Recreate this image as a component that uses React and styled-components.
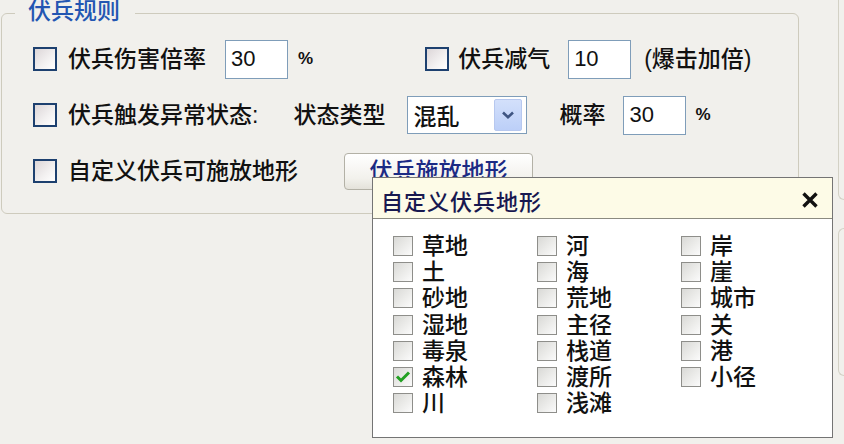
import React from 'react';
import styled, { createGlobalStyle } from 'styled-components';

const GlobalStyle = createGlobalStyle`
  html, body {
    margin: 0;
    padding: 0;
    background: #f1f0ec;
  }
  body {
    font-family: "Liberation Sans", "Noto Sans CJK SC", sans-serif;
    font-weight: 500;
    color: #111;
  }
`;

const Page = styled.div`
  position: relative;
  display: flex;
  align-items: flex-start;
  width: 844px;
  height: 444px;
  box-sizing: border-box;
  padding-left: 1px;
  background: #f1f0ec;
  overflow: hidden;
`;

const GroupBox = styled.fieldset`
  box-sizing: border-box;
  flex: none;
  width: 798px;
  min-width: 0;
  margin: 0;
  padding: 14px 20px 23px 31px;
  border: 1px solid #cecbbd;
  border-radius: 6px;
`;

const GroupTitle = styled.legend`
  margin-left: -18px;
  padding: 0 15px 4px 13px;
  font-size: 23px;
  line-height: 22px;
  color: #2356b2;
`;

const Rows = styled.div`
  display: flex;
  flex-direction: column;
  gap: 18px;
`;

const Row = styled.div`
  display: flex;
  align-items: center;
  height: 38px;
`;

const CheckBox = styled.span`
  flex: none;
  box-sizing: border-box;
  width: 24px;
  height: 24px;
  margin-left: ${(props) => props.$ml || 0}px;
  border: 2px solid #1d406f;
  background: linear-gradient(135deg, #dcd6d8 0%, #f3f1f1 60%, #ffffff 100%);
`;

const Label = styled.span`
  flex: none;
  margin-left: ${(props) => props.$ml || 0}px;
  font-size: 23px;
  line-height: 26px;
  white-space: nowrap;
`;

const Unit = styled.span`
  flex: none;
  margin-left: ${(props) => props.$ml || 0}px;
  font-size: 17px;
  font-weight: bold;
`;

const TextBox = styled.div`
  flex: none;
  box-sizing: border-box;
  display: flex;
  align-items: center;
  width: 63px;
  height: 39px;
  margin-left: ${(props) => props.$ml || 0}px;
  padding-left: 5px;
  border: 1px solid #7f9db9;
  background: #fff;
  font-size: 22px;
  font-weight: normal;
`;

const Combo = styled.div`
  flex: none;
  box-sizing: border-box;
  display: flex;
  align-items: center;
  justify-content: space-between;
  width: 120px;
  height: 38px;
  margin-left: ${(props) => props.$ml || 0}px;
  padding: 0 4px 0 5px;
  border: 1px solid #7f9db9;
  background: #fff;
  font-size: 23px;
`;

const ComboButton = styled.span`
  box-sizing: border-box;
  display: flex;
  align-items: center;
  justify-content: center;
  width: 28px;
  height: 32px;
  border: 1px solid #b7c8ef;
  border-radius: 2px;
  background: linear-gradient(180deg, #d3e0fb 0%, #bccff8 100%);
`;

const PushButton = styled.div`
  flex: none;
  box-sizing: border-box;
  display: flex;
  justify-content: center;
  width: 189px;
  height: 37px;
  margin-left: ${(props) => props.$ml || 0}px;
  padding-top: 4px;
  border: 1px solid #b3b1a6;
  border-radius: 4px;
  background: linear-gradient(180deg, #ffffff 0%, #f2f1ec 70%, #e4e2da 100%);
  color: #1b2a84;
  font-size: 23px;
  line-height: 26px;
`;

const SideColumn = styled.div`
  flex: none;
  display: flex;
  flex-direction: column;
  width: 30px;
  margin-left: 39px;
`;

const SideFrame = styled.div`
  box-sizing: border-box;
  height: ${(props) => props.$h}px;
  margin-top: ${(props) => props.$mt || 0}px;
  border: 1px solid #d3d1c5;
  border-right: none;
  border-top: ${(props) => (props.$open ? 'none' : '1px solid #d3d1c5')};
  border-radius: ${(props) => (props.$open ? '0 0 0 6px' : '6px 0 0 6px')};
`;

const Popup = styled.div`
  position: absolute;
  left: 372px;
  top: 177px;
  box-sizing: border-box;
  width: 461px;
  height: 261px;
  border: 1px solid #747474;
  background: #fff;
`;

const PopupHeader = styled.div`
  box-sizing: border-box;
  display: flex;
  align-items: center;
  justify-content: space-between;
  height: 41px;
  padding: 3px 14px 0 8px;
  border-bottom: 1px solid #8b8a80;
  background: #fdfbe7;
`;

const PopupTitle = styled.span`
  font-size: 22px;
  color: #181850;
  letter-spacing: 1px;
`;

const TerrainGrid = styled.div`
  display: grid;
  grid-template-rows: repeat(7, 26.2px);
  grid-auto-flow: column;
  grid-auto-columns: 144px;
  padding: 14px 0 0 20px;
`;

const TerrainItem = styled.div`
  display: flex;
  align-items: center;
  gap: 9px;
  font-size: 23px;
  line-height: 26px;
  white-space: nowrap;
`;

const SmallBox = styled.span`
  flex: none;
  box-sizing: border-box;
  display: flex;
  align-items: center;
  justify-content: center;
  width: 20px;
  height: 20px;
  border: 1px solid #8e8e8a;
  background: linear-gradient(135deg, #d9d9d6 0%, #ececea 55%, #fbfbfb 100%);
`;

const Chevron = () => (
  <svg width="14" height="10" viewBox="0 0 14 10">
    <path d="M2 2.5 L7 7.2 L12 2.5" fill="none" stroke="#3f5582" strokeWidth="2.6" />
  </svg>
);

const CloseIcon = () => (
  <svg width="16" height="16" viewBox="0 0 16 16">
    <path d="M1.5 1.5 L14.5 14.5 M14.5 1.5 L1.5 14.5" fill="none" stroke="#111" strokeWidth="3.4" />
  </svg>
);

const Tick = () => (
  <svg width="16" height="14" viewBox="0 0 16 14">
    <path d="M2 6.5 L6 10.5 L14 2.5" fill="none" stroke="#22a022" strokeWidth="3" />
  </svg>
);

const terrains = [
  '草地', '土', '砂地', '湿地', '毒泉', '森林', '川',
  '河', '海', '荒地', '主径', '栈道', '渡所', '浅滩',
  '岸', '崖', '城市', '关', '港', '小径',
];

const checked = ['森林'];

export default function App() {
  return (
    <>
      <GlobalStyle />
      <Page>
        <GroupBox>
          <GroupTitle>伏兵规则</GroupTitle>
          <Rows>
            <Row>
              <CheckBox />
              <Label $ml={11}>伏兵伤害倍率</Label>
              <TextBox $ml={19}>30</TextBox>
              <Unit $ml={10}>%</Unit>
              <CheckBox $ml={112} />
              <Label $ml={9}>伏兵减气</Label>
              <TextBox $ml={18}>10</TextBox>
              <Label $ml={13}>(爆击加倍)</Label>
            </Row>
            <Row>
              <CheckBox />
              <Label $ml={11}>伏兵触发异常状态:</Label>
              <Label $ml={35}>状态类型</Label>
              <Combo $ml={22}>
                混乱
                <ComboButton>
                  <Chevron />
                </ComboButton>
              </Combo>
              <Label $ml={32}>概率</Label>
              <TextBox $ml={18}>30</TextBox>
              <Unit $ml={9}>%</Unit>
            </Row>
            <Row>
              <CheckBox />
              <Label $ml={11}>自定义伏兵可施放地形</Label>
              <PushButton $ml={46}>伏兵施放地形</PushButton>
            </Row>
          </Rows>
        </GroupBox>
        <SideColumn>
          <SideFrame $h={200} $open />
          <SideFrame $h={148} $mt={28} />
        </SideColumn>
        <Popup>
          <PopupHeader>
            <PopupTitle>自定义伏兵地形</PopupTitle>
            <CloseIcon />
          </PopupHeader>
          <TerrainGrid>
            {terrains.map((name) => (
              <TerrainItem key={name}>
                <SmallBox>{checked.includes(name) && <Tick />}</SmallBox>
                {name}
              </TerrainItem>
            ))}
          </TerrainGrid>
        </Popup>
      </Page>
    </>
  );
}
